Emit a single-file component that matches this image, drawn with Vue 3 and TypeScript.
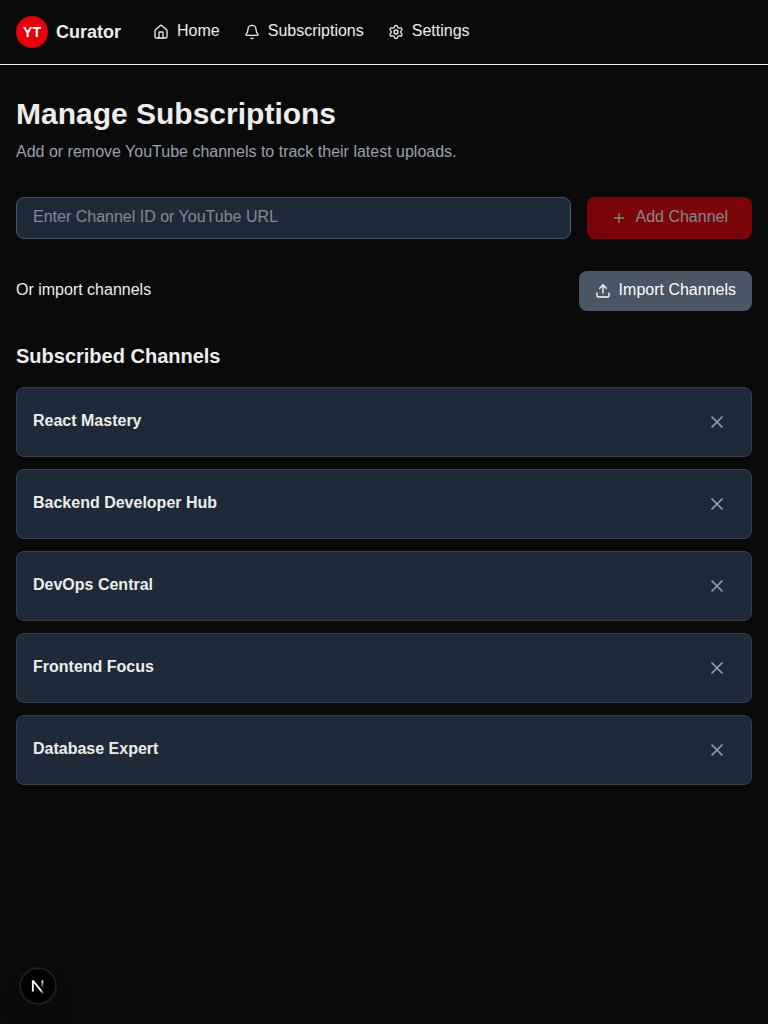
<script setup lang="ts">
import { ref } from 'vue'

interface Channel {
  id: number
  name: string
}

const channelInput = ref('')
const channels = ref<Channel[]>([
  { id: 1, name: 'React Mastery' },
  { id: 2, name: 'Backend Developer Hub' },
  { id: 3, name: 'DevOps Central' },
  { id: 4, name: 'Frontend Focus' },
  { id: 5, name: 'Database Expert' },
])

function addChannel(): void {
  const name = channelInput.value.trim()
  if (!name) return
  channels.value.push({ id: Date.now(), name })
  channelInput.value = ''
}

function removeChannel(id: number): void {
  channels.value = channels.value.filter((c) => c.id !== id)
}
</script>

<template>
  <div class="page">
    <header class="header">
      <a class="brand">
        <span class="logo">YT</span>
        <span class="brand-name">Curator</span>
      </a>
      <nav class="nav">
        <a class="link">
          <svg class="icon" viewBox="0 0 24 24">
            <path d="M15 21v-8a1 1 0 0 0-1-1h-4a1 1 0 0 0-1 1v8" />
            <path d="M3 10a2 2 0 0 1 .709-1.528l7-5.999a2 2 0 0 1 2.582 0l7 5.999A2 2 0 0 1 21 10v9a2 2 0 0 1-2 2H5a2 2 0 0 1-2-2z" />
          </svg>
          <span class="label">Home</span>
        </a>
        <a class="link">
          <svg class="icon" viewBox="0 0 24 24">
            <path d="M10.268 21a2 2 0 0 0 3.464 0" />
            <path d="M3.262 15.326A1 1 0 0 0 4 17h16a1 1 0 0 0 .74-1.673C19.41 13.956 18 12.499 18 8A6 6 0 0 0 6 8c0 4.499-1.411 5.956-2.738 7.326" />
          </svg>
          <span class="label">Subscriptions</span>
        </a>
        <a class="link">
          <svg class="icon" viewBox="0 0 24 24">
            <path d="M9.671 4.136a2.34 2.34 0 0 1 4.659 0 2.34 2.34 0 0 0 3.319 1.915 2.34 2.34 0 0 1 2.33 4.033 2.34 2.34 0 0 0 0 3.831 2.34 2.34 0 0 1-2.33 4.033 2.34 2.34 0 0 0-3.319 1.915 2.34 2.34 0 0 1-4.659 0 2.34 2.34 0 0 0-3.32-1.915 2.34 2.34 0 0 1-2.33-4.033 2.34 2.34 0 0 0 0-3.831A2.34 2.34 0 0 1 6.35 6.051a2.34 2.34 0 0 0 3.319-1.915" />
            <circle cx="12" cy="12" r="3" />
          </svg>
          <span class="label">Settings</span>
        </a>
      </nav>
    </header>

    <main class="main">
      <h1>Manage Subscriptions</h1>
      <p class="lead">Add or remove YouTube channels to track their latest uploads.</p>

      <form class="add-form" @submit.prevent="addChannel">
        <input v-model="channelInput" type="text" placeholder="Enter Channel ID or YouTube URL" />
        <button class="btn add" type="submit" :disabled="!channelInput.trim()">
          <svg class="icon" viewBox="0 0 24 24"><path d="M5 12h14M12 5v14" /></svg>
          <span class="label">Add Channel</span>
        </button>
      </form>

      <div class="import-row">
        <span class="label">Or import channels</span>
        <button class="btn import" type="button">
          <svg class="icon" viewBox="0 0 24 24">
            <path d="M12 3v12" />
            <path d="m17 8-5-5-5 5" />
            <path d="M21 15v4a2 2 0 0 1-2 2H5a2 2 0 0 1-2-2v-4" />
          </svg>
          <span class="label">Import Channels</span>
        </button>
      </div>

      <h2>Subscribed Channels</h2>
      <ul class="list">
        <li v-for="channel in channels" :key="channel.id" class="card">
          <h3>{{ channel.name }}</h3>
          <button class="remove" type="button" aria-label="Remove" @click="removeChannel(channel.id)">
            <svg class="icon large" viewBox="0 0 24 24"><path d="M18 6 6 18M6 6l12 12" /></svg>
          </button>
        </li>
      </ul>
    </main>

    <button class="dev-badge" type="button" aria-label="Dev tools">
      <svg width="36" height="36" viewBox="0 0 36 36" fill="none">
        <defs>
          <linearGradient id="diag" x1="9.955" y1="11.13" x2="15.464" y2="17.967" gradientUnits="userSpaceOnUse">
            <stop stop-color="#fff" />
            <stop offset="0.604" stop-color="#fff" stop-opacity="0" />
            <stop offset="1" stop-color="#fff" stop-opacity="0" />
          </linearGradient>
          <linearGradient id="stem" x1="11.822" y1="1.4" x2="11.793" y2="9.62" gradientUnits="userSpaceOnUse">
            <stop stop-color="#fff" />
            <stop offset="1" stop-color="#fff" stop-opacity="0" />
          </linearGradient>
        </defs>
        <g transform="translate(10.5 11)" stroke-width="1.86" stroke-linejoin="bevel">
          <path d="M13.3 15.2 2.34 1.5v11.1" stroke="url(#diag)" />
          <path d="M11.825 1.5v11.6" stroke="url(#stem)" />
        </g>
      </svg>
    </button>
  </div>
</template>

<style>
body {
  margin: 0;
  background: #0a0a0a;
}
</style>

<style scoped>
.page {
  min-height: 100vh;
  background: #0a0a0a;
  color: #ededed;
  font: 16px/24px "Liberation Sans", Arial, Helvetica, sans-serif;
}
.page *,
.page {
  box-sizing: border-box;
}
h1, h2, h3, p, ul {
  margin: 0;
  padding: 0;
}
button,
input {
  font: inherit;
  margin: 0;
}
button {
  border: 0;
}
.icon {
  width: 16px;
  height: 16px;
  flex: none;
  fill: none;
  stroke: currentColor;
  stroke-width: 2;
  stroke-linecap: round;
  stroke-linejoin: round;
}
.icon.large {
  width: 20px;
  height: 20px;
  display: block;
}
.label {
  line-height: 22px;
  padding-bottom: 2px;
}
.header {
  height: 65px;
  padding: 0 16px;
  display: flex;
  align-items: center;
  gap: 32px;
  border-bottom: 1px solid #ededed;
}
.brand {
  display: flex;
  align-items: center;
  gap: 8px;
}
.logo {
  width: 32px;
  height: 32px;
  border-radius: 50%;
  background: #e7000b;
  color: #fff;
  font-size: 14px;
  line-height: 20px;
  font-weight: 700;
  display: flex;
  align-items: center;
  justify-content: center;
}
.brand-name {
  font-size: 18px;
  line-height: 28px;
  font-weight: 700;
}
.nav {
  display: flex;
  gap: 24px;
}
.link {
  display: flex;
  align-items: center;
  gap: 8px;
}
.main {
  padding: 32px 16px;
}
h1 {
  font-size: 30px;
  line-height: 34px;
  padding-bottom: 2px;
  font-weight: 700;
  margin-bottom: 8px;
}
.lead {
  color: #99a1af;
  line-height: 22px;
  padding-bottom: 2px;
  margin-bottom: 32px;
}
.add-form {
  display: flex;
  gap: 16px;
  margin-bottom: 32px;
}
input {
  flex: 1;
  min-width: 0;
  height: 42px;
  padding: 7px 16px 9px;
  border: 1px solid #4a5565;
  border-radius: 8px;
  background: #1e2939;
  color: #ededed;
  outline: none;
}
input::placeholder {
  color: rgba(237, 237, 237, 0.5);
  opacity: 1;
}
.btn {
  display: flex;
  align-items: center;
  gap: 8px;
  border-radius: 8px;
  color: #fff;
}
.add {
  padding: 8px 24px;
  background: #e7000b;
}
.add:disabled {
  opacity: 0.5;
}
.import-row {
  display: flex;
  align-items: center;
  justify-content: space-between;
  margin-bottom: 32px;
}
.import {
  padding: 8px 16px;
  background: #4a5565;
}
h2 {
  font-size: 20px;
  line-height: 26px;
  padding-bottom: 2px;
  font-weight: 600;
  margin-bottom: 16px;
}
.list {
  list-style: none;
  display: grid;
  gap: 12px;
}
.card {
  display: flex;
  align-items: center;
  justify-content: space-between;
  padding: 16px;
  border: 1px solid #364153;
  border-radius: 8px;
  background: #1e2939;
}
h3 {
  font-size: 16px;
  line-height: 22px;
  padding-bottom: 2px;
  font-weight: 600;
}
.remove {
  padding: 8px;
  background: transparent;
  color: #99a1af;
}
.dev-badge {
  position: fixed;
  left: 20px;
  bottom: 20px;
  width: 36px;
  height: 36px;
  padding: 0;
  border-radius: 50%;
  background: #000;
  box-shadow: 0 0 0 1px #171717, inset 0 0 0 1px rgba(255, 255, 255, 0.14), 0 16px 32px -8px rgba(0, 0, 0, 0.24);
}
.dev-badge svg {
  display: block;
}
</style>
